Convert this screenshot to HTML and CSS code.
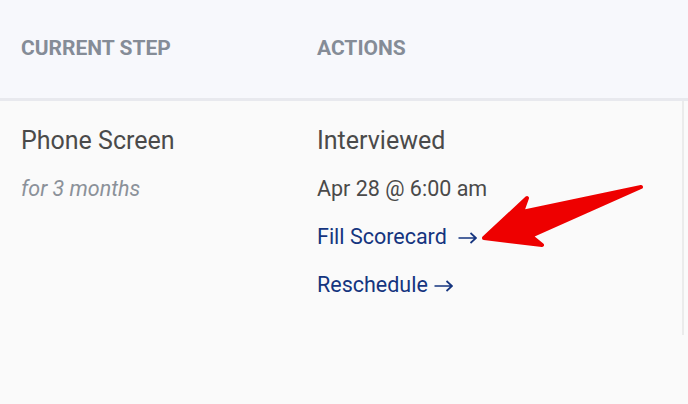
FILE: index.html
```html
<!DOCTYPE html>
<html lang="en">
<head>
  <meta charset="UTF-8" />
  <title>Candidate Step</title>
  <link rel="stylesheet" href="styles.css">
</head>
<body>

  <div class="table">
    <div class="table-head">
      <div class="cell">Current Step</div>
      <div class="cell">Actions</div>
    </div>

    <div class="table-row">
      <div class="cell">
        <p class="step-name">Phone Screen</p>
        <p class="step-age">for 3 months</p>
      </div>
      <div class="cell">
        <p class="step-name">Interviewed</p>
        <p class="step-date">Apr 28 @ 6:00 am</p>
        <p class="action">
          <a href="#" class="wide">Fill Scorecard
            <svg class="arr" width="19" height="12" viewBox="0 0 19 12"><path d="M0.5 6H18M12.5 1l5.5 5-5.5 5" fill="none" stroke="currentColor" stroke-width="1.7" /></svg>
          </a>
        </p>
        <p class="action">
          <a href="#">Reschedule
            <svg class="arr" width="19" height="12" viewBox="0 0 19 12"><path d="M0.5 6H18M12.5 1l5.5 5-5.5 5" fill="none" stroke="currentColor" stroke-width="1.7" /></svg>
          </a>
        </p>
      </div>

      <svg class="pointer" width="180" height="80" viewBox="470 176 180 80">
        <polygon points="484,238 527,198 522,212 641,187 531,236 542,245"
                 fill="#ee0000" stroke="#ee0000" stroke-width="4" stroke-linejoin="round" />
      </svg>
    </div>
  </div>

</body>
</html>
```

FILE: styles.css
```css
* {
  box-sizing: border-box;
}
body {
  margin: 0;
  font-family: Roboto, "Liberation Sans", Arial, sans-serif;
  background-color: #fafafa;
}
.table {
  width: 688px;
}
.table-head,
.table-row {
  display: grid;
  grid-template-columns: 296px 1fr;
}
.cell {
  padding: 0 21px;
}
.table-head {
  height: 101px;
  align-items: center;
  background-color: #f7f8fc;
  border-bottom: 3px solid #e8e9ee;
}
.table-head .cell {
  font-size: 21px;
  font-weight: 700;
  text-transform: uppercase;
  color: #858c97;
  padding-bottom: 2px;
}
.table-row {
  position: relative;
  height: 234px;
  padding-top: 25px;
  border-right: 2px solid #ebebeb;
  margin-right: 4px;
}
p {
  margin: 0 0 18px;
  line-height: 30px;
}
.step-name {
  font-size: 25px;
  color: #4a4a4a;
}
.step-age {
  font-size: 21.5px;
  font-style: italic;
  color: #8b9199;
}
.step-date {
  font-size: 21.5px;
  color: #4a4a4a;
}
.action {
  font-size: 21.5px;
}
.action a {
  display: inline-flex;
  align-items: center;
  gap: 6px;
  color: #15357f;
  text-decoration: none;
}
.action a.wide {
  gap: 11px;
}
.arr {
  margin-top: 2px;
}
.pointer {
  position: absolute;
  left: 470px;
  top: 75px;
}
```
